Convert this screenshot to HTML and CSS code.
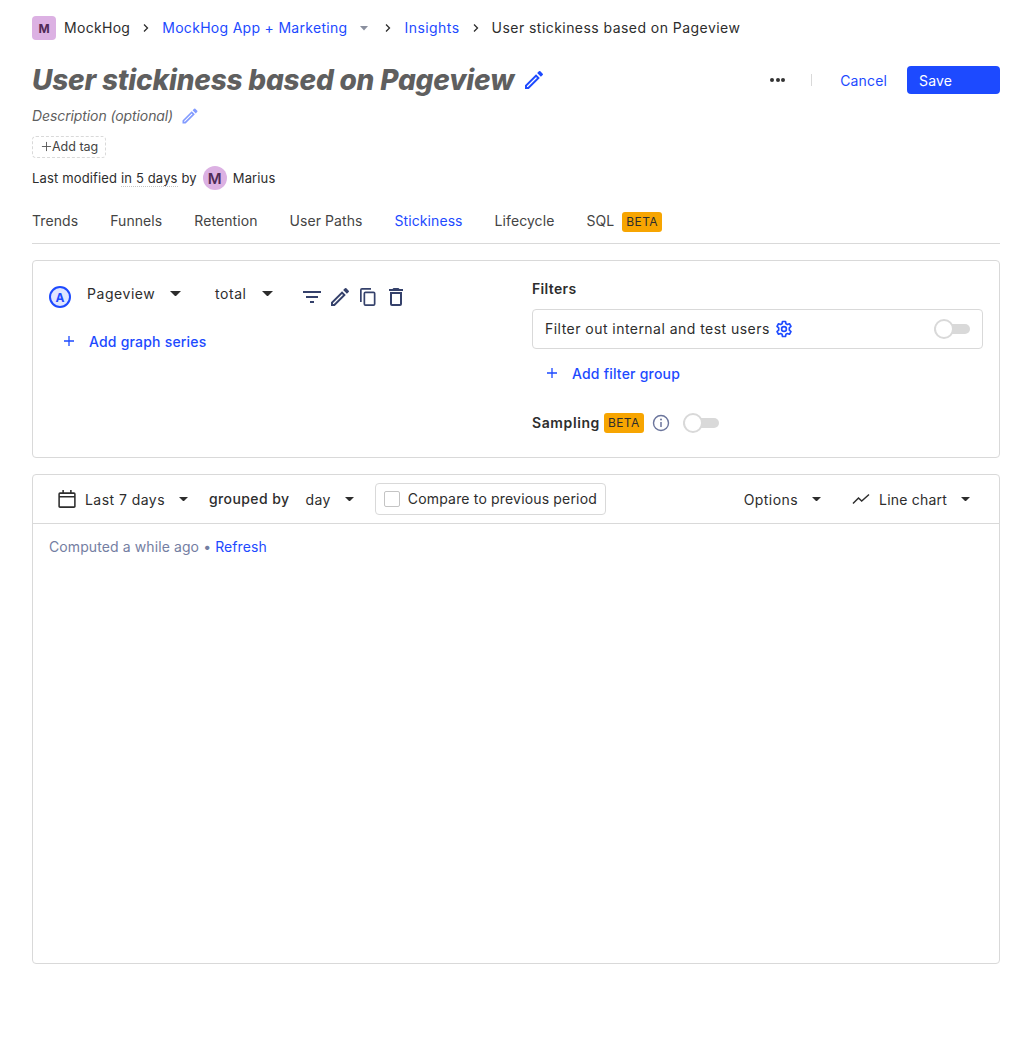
FILE: index.html
```html
<!DOCTYPE html>
<html lang="en">
<head>
    <meta charset="UTF-8">
    <title>User stickiness based on Pageview</title>
    <link rel="stylesheet" href="styles.css">
</head>

<body>
<div class="page">
    <div class="crumbs">
        <span class="org-badge">M</span>
        <span class="crumb">MockHog</span>
        <svg class="chev" viewBox="0 0 8 12"><path d="M2 2.500 5.500 6 2 9.500" fill="none" stroke="#2d2d2d" stroke-width="1.300"/></svg>
        <a class="crumb link">MockHog App + Marketing</a>
        <svg class="crumb-caret" viewBox="0 0 8 5"><path d="M0 0h8L4 4.500z" fill="#8a8f9e"/></svg>
        <svg class="chev" viewBox="0 0 8 12"><path d="M2 2.500 5.500 6 2 9.500" fill="none" stroke="#2d2d2d" stroke-width="1.300"/></svg>
        <a class="crumb link crumb-wide">Insights</a>
        <svg class="chev" viewBox="0 0 8 12"><path d="M2 2.500 5.500 6 2 9.500" fill="none" stroke="#2d2d2d" stroke-width="1.300"/></svg>
        <span class="crumb crumb-wide">User stickiness based on Pageview</span>
    </div>

    <div class="title-row">
        <div class="title-left">
            <h1>User stickiness based on Pageview</h1>
            <svg class="title-pen" viewBox="0 0 24 24"><path fill="#1d4aff" d="M3 17.250V21h3.750L17.810 9.940l-3.750-3.750L3 17.250zM5.920 19H5v-.92l9.060-9.060.92.92L5.920 19zM20.710 7.040a1 1 0 0 0 0-1.410l-2.340-2.340a1 1 0 0 0-1.410 0l-1.830 1.830 3.750 3.750 1.830-1.830z"/></svg>
        </div>
        <div class="title-actions">
            <span class="dots"><i></i><i></i><i></i></span>
            <span class="vline"></span>
            <a class="cancel">Cancel</a>
            <a class="save">Save</a>
        </div>
    </div>

    <div class="desc">
        <span>Description (optional)</span>
        <svg class="desc-pen" viewBox="0 0 24 24"><path fill="#1d4aff" d="M3 17.250V21h3.750L17.810 9.940l-3.750-3.750L3 17.250zM5.920 19H5v-.92l9.060-9.060.92.92L5.920 19zM20.710 7.040a1 1 0 0 0 0-1.410l-2.340-2.340a1 1 0 0 0-1.410 0l-1.830 1.830 3.750 3.750 1.830-1.830z"/></svg>
    </div>

    <div class="tag"><svg viewBox="0 0 12 12"><path d="M6 1v10M1 6h10" stroke="#555" stroke-width="1"/></svg>Add tag</div>

    <div class="modified">
        <span>Last modified <span class="dotted">in 5 days</span> by</span>
        <span class="avatar">M</span>
        <span class="author">Marius</span>
    </div>

    <div class="tabs">
        <a>Trends</a>
        <a>Funnels</a>
        <a>Retention</a>
        <a>User Paths</a>
        <a class="current">Stickiness</a>
        <a>Lifecycle</a>
        <a>SQL <span class="beta">BETA</span></a>
    </div>

    <div class="card query">
        <div class="series">
            <div class="series-row">
                <span class="letter">A</span>
                <span class="picker picker-event">Pageview <svg class="caret" viewBox="0 0 10 5"><path d="M0 0h10L5 5z"/></svg></span>
                <span class="picker picker-math">total <svg class="caret" viewBox="0 0 10 5"><path d="M0 0h10L5 5z"/></svg></span>
                <span class="series-icons">
                    <svg viewBox="0 0 24 24"><path fill="#35416b" d="M10 18h4v-2h-4v2zM3 6v2h18V6H3zm3 7h12v-2H6v2z"/></svg>
                    <svg viewBox="0 0 24 24"><path fill="#35416b" d="M3 17.250V21h3.750L17.810 9.940l-3.750-3.750L3 17.250zM5.920 19H5v-.92l9.060-9.060.92.92L5.920 19zM20.710 7.040a1 1 0 0 0 0-1.410l-2.340-2.340a1 1 0 0 0-1.410 0l-1.830 1.830 3.750 3.750 1.830-1.830z"/></svg>
                    <svg viewBox="0 0 24 24"><path fill="#35416b" d="M15 3H6a2 2 0 0 0-2 2v12h1.700V4.700H15V3zm2.500 3.500h-8a2 2 0 0 0-2 2V19a2 2 0 0 0 2 2h8a2 2 0 0 0 2-2V8.500a2 2 0 0 0-2-2zm.3 12.800H9.200V8.200h8.600v11.100z"/></svg>
                    <svg viewBox="0 0 24 24"><path fill="#35416b" d="M6 19a2 2 0 0 0 2 2h8a2 2 0 0 0 2-2V7H6v12zM8 9h8v10H8V9zM15.500 4l-1-1h-5l-1 1H5v2h14V4z"/></svg>
                </span>
            </div>
            <a class="add-btn add-series"><svg viewBox="0 0 12 12"><path d="M6 1v10M1 6h10" stroke="#1d4aff" stroke-width="1.300"/></svg>Add graph series</a>
        </div>
        <div class="filters">
            <div class="section-title">Filters</div>
            <div class="filter-box">
                <span>Filter out internal and test users</span>
                <svg class="gear" viewBox="0 0 24 24"><path fill="none" stroke="#1d4aff" stroke-width="2.200" stroke-linejoin="round" d="M10 2h4l.6 3 1.900 1 2.800-1 2 3.500-2.200 2v3l2.200 2-2 3.500-2.800-1-1.900 1-.6 3h-4l-.6-3-1.900-1-2.800 1-2-3.500 2.200-2v-3l-2.200-2 2-3.500 2.800 1 1.900-1z"/><circle cx="12" cy="12" r="3.200" fill="none" stroke="#1d4aff" stroke-width="2.200"/></svg>
                <span class="switch switch-right"></span>
            </div>
            <a class="add-btn add-filter"><svg viewBox="0 0 12 12"><path d="M6 1v10M1 6h10" stroke="#1d4aff" stroke-width="1.300"/></svg>Add filter group</a>
            <div class="sampling">
                <span class="section-title">Sampling</span>
                <span class="beta">BETA</span>
                <svg class="info" viewBox="0 0 18 18"><circle cx="9" cy="9" r="7.500" fill="none" stroke="#6b759c" stroke-width="1.400"/><path d="M9 8v5" stroke="#6b759c" stroke-width="1.500"/><circle cx="9" cy="5.500" r="1" fill="#6b759c"/></svg>
                <span class="switch"></span>
            </div>
        </div>
    </div>

    <div class="card results">
        <div class="toolbar">
            <svg class="cal" viewBox="0 0 18 18"><path fill="none" stroke="#2d2d2d" stroke-width="1.400" d="M2.700 3.700h12.600a.8.8 0 0 1 .8.800v11a.8.8 0 0 1-.8.800H2.700a.8.8 0 0 1-.8-.8v-11a.8.8 0 0 1 .8-.8zM2 7h14M5.500 1v3M12.500 1v3"/></svg>
            <span class="tool tool-date">Last 7 days <svg class="caret small" viewBox="0 0 10 5"><path d="M0 0h10L5 5z"/></svg></span>
            <span class="grouped">grouped by</span>
            <span class="tool tool-day">day <svg class="caret small" viewBox="0 0 10 5"><path d="M0 0h10L5 5z"/></svg></span>
            <span class="compare"><span class="check"></span><span class="compare-text">Compare to previous period</span></span>
            <span class="toolbar-right">
                <span class="tool tool-options">Options <svg class="caret small" viewBox="0 0 10 5"><path d="M0 0h10L5 5z"/></svg></span>
                <svg class="line-icon" viewBox="0 0 18 12"><path d="M1 10.500 6.500 5l3.200 3L17 1.500" fill="none" stroke="#2d2d2d" stroke-width="1.500"/></svg>
                <span class="tool tool-chart">Line chart <svg class="caret small" viewBox="0 0 10 5"><path d="M0 0h10L5 5z"/></svg></span>
            </span>
        </div>
        <div class="computed">Computed a while ago • <a>Refresh</a></div>
    </div>
</div>
</body>
</html>
```

FILE: styles.css
```css
* { box-sizing: border-box; }
body {
    margin: 0;
    font-family: Inter, "Liberation Sans", sans-serif;
    font-size: 14px;
    color: #2d2d2d;
    background: #fff;
}
a { color: #1d4aff; }
.page { padding: 16px 32px 80px; }

.crumbs { display: flex; align-items: center; height: 24px; }
.org-badge {
    width: 24px; height: 24px; border-radius: 4px;
    background: #dcb1e3; color: #4f2a57;
    font-size: 12px; font-weight: 700;
    display: flex; align-items: center; justify-content: center;
    margin-right: 8px;
}
.crumb { letter-spacing: .3px; padding-bottom: 2px; }
.crumb-wide { letter-spacing: .45px; }
.chev { width: 8px; height: 12px; margin: 0 12px; }
.crumb-caret { width: 8px; height: 5px; margin-left: 13px; margin-right: 4px; }

.title-row { display: flex; justify-content: space-between; align-items: center; margin-top: 20px; height: 40px; }
.title-left { display: flex; align-items: center; }
h1 {
    margin: 0;
    font-size: 28px; line-height: 40px; font-weight: 800; font-style: italic;
    color: #5f5f5f;
    letter-spacing: -.2px;
}
.title-pen { width: 24px; height: 24px; margin-left: 8px; }
.title-actions { display: flex; align-items: center; }
.dots { display: flex; gap: 1.500px; margin-right: 26px; }
.dots i { width: 4px; height: 4px; border-radius: 50%; background: #333; }
.vline { width: 1px; height: 12px; background: #d9d9d9; margin-right: 28px; }
.cancel { margin-right: 20px; letter-spacing: .15px; }
.save {
    width: 93px; height: 28px; line-height: 29px; padding-left: 12px;
    background: #1d4aff; color: #fff; border-radius: 4px; letter-spacing: .2px;
}

.desc { display: flex; align-items: center; height: 24px; margin-top: 4px; font-style: italic; color: #5f5f5f; letter-spacing: -.1px; }
.desc span { padding-bottom: 2px; }
.desc-pen { width: 20px; height: 20px; margin-left: 7px; opacity: .55; }
.tag {
    display: flex; align-items: center;
    width: 74px; height: 22px; margin-top: 8px; padding: 0 0 1px 8px;
    border: 1px dashed #d9d9d9; border-radius: 4px;
    font-size: 12.500px; color: #444;
}
.tag svg { width: 11px; height: 11px; }
.modified { display: flex; align-items: center; height: 24px; margin-top: 8px; font-size: 13px; letter-spacing: .15px; }
.dotted { border-bottom: 1px dotted #c4c4c4; }
.avatar {
    width: 24px; height: 24px; border-radius: 50%; margin: 0 6px 0 6px;
    background: #dcb1e3; color: #4f2a57; font-size: 15px; font-weight: 600;
    display: flex; align-items: center; justify-content: center;
}

.tabs {
    display: flex; gap: 32px; align-items: center;
    height: 54px; padding-top: 8px; margin-top: 0;
    border-bottom: 1px solid #d9d9d9;
    color: #444;
    letter-spacing: .08px;
}
.tabs a { color: #444; display: flex; align-items: center; gap: 8px; white-space: nowrap; }
.tabs a.current { color: #1d4aff; }
.tabs .beta { margin-top: 2px; }
.beta {
    display: inline-block; height: 20px; line-height: 20px; padding: 0 4px;
    background: #f7a501; border-radius: 3px; font-size: 12px; color: #2d2d2d; letter-spacing: .4px;
}

.card { border: 1px solid #d9d9d9; border-radius: 4px; }
.query { display: flex; height: 198px; margin-top: 16px; padding: 16px; }
.series { width: 483px; }
.series-row { display: flex; align-items: center; height: 40px; margin-top: 0; }
.letter {
    width: 22px; height: 22px; border-radius: 50%;
    border: 2px solid #1d4aff; background: #e0e6ff; color: #1d4aff;
    font-size: 12px; font-weight: 700;
    display: flex; align-items: center; justify-content: center;
}
.picker { display: flex; align-items: center; margin-top: -7px; letter-spacing: .55px; }
.picker-event { margin-left: 16px; width: 128px; }
.picker-math { width: 85px; }
.caret { width: 11px; height: 5.500px; margin-left: 15px; fill: #2d2d2d; }
.caret.small { width: 9px; height: 4.500px; margin-left: 14px; }
.series-icons { display: flex; gap: 4px; }
.series-icons svg { width: 24px; height: 24px; }
.add-btn { display: flex; align-items: center; font-weight: 500; letter-spacing: .2px; }
.add-btn svg { width: 12px; height: 12px; margin-right: 14px; }
.add-series { margin: 12px 0 0 14px; height: 24px; }

.filters { width: 451px; }
.section-title { font-weight: 600; letter-spacing: .35px; }
.filters > .section-title { height: 24px; line-height: 24px; }
.filter-box {
    display: flex; align-items: center;
    height: 40px; padding: 0 12px; margin-top: 8px;
    border: 1px solid #d9d9d9; border-radius: 4px;
    letter-spacing: .46px;
}
.filter-box > span:first-child { padding-bottom: 2px; }
.gear { width: 18px; height: 18px; margin-left: 5px; }
.switch { position: relative; display: block; width: 36px; height: 10px; background: #d9d9d9; border-radius: 5px; }
.switch::before {
    content: ""; position: absolute; left: 0; top: -5px;
    box-sizing: border-box;
    width: 20px; height: 20px; border-radius: 50%;
    background: #fff; border: 2px solid #d9d9d9;
}
.switch-right { margin-left: auto; }
.add-filter { margin: 12px 0 0 14px; height: 24px; }
.sampling { display: flex; align-items: center; margin-top: 26px; height: 24px; }
.sampling .section-title { letter-spacing: .6px; padding-bottom: 1px; }
.sampling .beta { margin-left: 4px; }
.info { width: 18px; height: 18px; margin: 0 13px 0 8px; }

.results { height: 490px; margin-top: 16px; }
.toolbar {
    display: flex; align-items: center;
    height: 49px; padding: 0 16px 0 24px;
    border-bottom: 1px solid #d9d9d9;
    letter-spacing: .45px;
}
.cal { width: 20px; height: 20px; margin-right: 8px; }
.tool { display: flex; align-items: center; }
.tool-date { margin-right: 21px; }
.grouped { font-weight: 450; margin-right: 16px; letter-spacing: .4px; padding-bottom: 2px; }
.tool-day { margin-right: 21px; }
.compare {
    display: flex; align-items: center; height: 32px; padding: 0 8px;
    border: 1px solid #d9d9d9; border-radius: 4px;
    letter-spacing: .17px;
}
.compare-text { padding-bottom: 2px; }
.check { width: 16px; height: 16px; border: 1px solid #c4c4c4; border-radius: 2px; margin-right: 8px; }
.toolbar-right { display: flex; align-items: center; margin-left: auto; margin-right: 13px; }
.tool-options { margin-right: 31px; }
.tool-chart { letter-spacing: .2px; }
.line-icon { width: 18px; height: 12px; margin-right: 9px; }
.computed { padding: 14px 16px; color: #747ea2; letter-spacing: .1px; }
```
